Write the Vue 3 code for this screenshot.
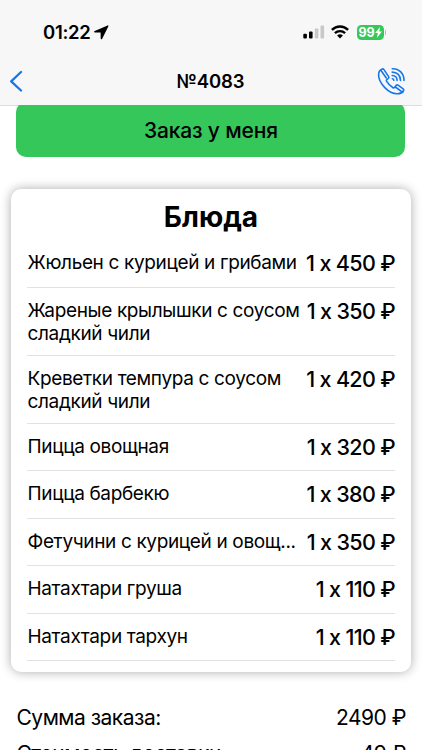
<script setup>
import { ref } from 'vue'

const dishes = ref([
  { id: 1, name: 'Жюльен с курицей и грибами', count: 1, price: 450 },
  { id: 2, name: 'Жареные крылышки с соусом сладкий чили', count: 1, price: 350, long: true },
  { id: 3, name: 'Креветки темпура с соусом сладкий чили', count: 1, price: 420, long: true },
  { id: 4, name: 'Пицца овощная', count: 1, price: 320 },
  { id: 5, name: 'Пицца барбекю', count: 1, price: 380 },
  { id: 6, name: 'Фетучини с курицей и овощ...', count: 1, price: 350 },
  { id: 7, name: 'Натахтари груша', count: 1, price: 110 },
  { id: 8, name: 'Натахтари тархун', count: 1, price: 110 },
])

const totals = ref([
  { label: 'Сумма заказа:', value: 2490 },
  { label: 'Стоимость доставки:', value: 49 },
])
</script>

<template>
  <div class="screen">
    <header class="header">
      <div class="status">
        <div class="clock">
          <span>01:22</span>
          <svg width="15" height="15" viewBox="0 0 15 15">
            <path d="M13.600.400.700 5.900c-.9.400-.7 1.500.2 1.500l5.700.1.1 6c0 .9 1.100 1.100 1.500.2L14.400 1.200c.2-.5-.3-1-.8-.8z" />
          </svg>
        </div>
        <div class="indicators">
          <svg width="22" height="14" viewBox="0 0 22 14">
            <rect x="0.300" y="8.700" width="3.600" height="4.700" rx="1" />
            <rect x="6" y="6.500" width="3.600" height="6.900" rx="1" />
            <rect x="11.800" y="3.600" width="3.600" height="9.800" rx="1" fill="#c8c8c8" />
            <rect x="17.500" y="0.500" width="3.600" height="12.900" rx="1" fill="#c8c8c8" />
          </svg>
          <svg class="wifi" width="18" height="14" viewBox="0 0 18 14">
            <path d="M.9 4.900c4.600-4.600 11.600-4.600 16.200 0M3.900 8.200c2.900-2.800 7.300-2.800 10.200 0" fill="none" stroke="#000" stroke-width="2.400" />
            <path d="M6.100 10.400c1.700-1.500 4.100-1.500 5.800 0L9 13.400z" />
          </svg>
          <div class="battery">
            <span>99</span>
            <svg width="7" height="11" viewBox="0 0 7 11">
              <path d="M5.100 0 .1 6h2.700L1.900 11l5-6.400H4.200z" fill="#fff" />
            </svg>
          </div>
          <i class="cap"></i>
        </div>
      </div>
      <div class="nav">
        <svg width="14" height="22" viewBox="0 0 14 22">
          <path d="M12 2 2.200 11.300 12 20.500" fill="none" stroke="#1677ec" stroke-width="2.300" stroke-linecap="round" stroke-linejoin="round" />
        </svg>
        <h1>№4083</h1>
        <svg class="phone" width="29" height="29" viewBox="0 0 29 29" fill="none" stroke="#1677ec" stroke-width="1.600" stroke-linecap="round" stroke-linejoin="round">
          <path d="M5.300 1.900C3 2.600 1.600 5 1.600 8c0 4 2.300 8.500 6.200 12.600 4.200 4.300 8.900 6.300 12.800 6.100 3 0 5-1.400 6-3.200.4-.7.200-1.300-.4-1.700l-5.200-3.600c-.7-.5-1.400-.4-1.900.2l-1.600 2c-.4.500-1 .6-1.500.3-2.400-1.400-5-4-6.500-6.500-.3-.6-.2-1.100.3-1.500l1.500-1.200c.6-.5.7-1.200.3-1.900L7 2.600c-.4-.7-1-.9-1.700-.7z" />
          <path d="m4 3.500 5.300 7.500M18.300 20l7.500 5.300" />
          <path d="M15.200 1.700c7-.2 11.900 4.700 11.800 11.800M15.200 5.100c5 0 8.300 3.400 8.300 8.400M15.200 8.500c2.900.1 4.800 2 4.900 4.900M15.300 11.700c.9.100 1.500.7 1.600 1.600" />
        </svg>
      </div>
    </header>

    <main class="content">
      <button class="take">Заказ у меня</button>

      <section class="card">
        <h2>Блюда</h2>
        <div v-for="dish in dishes" :key="dish.id" class="dish" :class="{ long: dish.long }">
          <span class="name">{{ dish.name }}</span>
          <span class="price">{{ dish.count }} x {{ dish.price }} ₽</span>
        </div>
      </section>

      <div class="totals">
        <div v-for="row in totals" :key="row.label" class="total">
          <span class="label">{{ row.label }}</span>
          <span class="value">{{ row.value }} ₽</span>
        </div>
      </div>
    </main>
  </div>
</template>

<style>
body {
  margin: 0;
  overflow: hidden;
}
</style>

<style scoped>
.screen {
  width: 422px;
  height: 750px;
  overflow: hidden;
  background: #fff;
  color: #000;
  font-family: Inter, 'Liberation Sans', sans-serif;
  font-feature-settings: 'calt' 0;
}
.header {
  position: relative;
  z-index: 1;
  box-sizing: border-box;
  height: 105px;
  background: #f7f7f7;
}
.status {
  display: flex;
  justify-content: space-between;
  box-sizing: border-box;
  height: 62px;
  padding: 20px 36px 0 43px;
}
.clock {
  display: flex;
  height: 24px;
  align-items: center;
  font-size: 18.5px;
  font-weight: 600;
  letter-spacing: -0.3px;
}
.clock svg {
  margin-left: 4px;
}
.indicators {
  display: flex;
  height: 24px;
  align-items: center;
}
.wifi {
  margin-left: 6px;
}
.battery {
  display: flex;
  align-items: center;
  justify-content: center;
  width: 27px;
  height: 15px;
  margin-left: 8px;
  border-radius: 4.5px;
  background: #35c759;
  color: #fff;
  font-size: 12.5px;
  font-weight: 700;
  letter-spacing: -0.1px;
}
.cap {
  width: 1.5px;
  height: 5px;
  margin-left: 1px;
  border-radius: 0 2px 2px 0;
  background: #bbb;
}
.nav {
  display: flex;
  align-items: center;
  height: 38px;
  padding: 0 16px 0 9px;
}
.nav h1 {
  flex: 1;
  margin: 0 0 0 6px;
  font-size: 18.5px;
  font-weight: 600;
  letter-spacing: -0.1px;
  text-align: center;
  text-indent: 15px;
}
.content {
  border-top: 1px solid #dcdcdc;
}
.take {
  position: relative;
  display: block;
  width: 389px;
  height: 55px;
  margin: -4px 16.4px 0;
  padding: 2px 0 0;
  border: 0;
  border-radius: 10px;
  background: #35c759;
  color: #000;
  font-family: inherit;
  font-size: 21px;
  font-weight: 500;
  letter-spacing: -0.15px;
}
.card {
  box-sizing: border-box;
  width: 400px;
  height: 483px;
  margin: 32px 11px 0;
  padding: 8px 16px 0;
  border-radius: 10px;
  background: #fff;
  box-shadow: 0 0 11px rgba(0, 0, 0, 0.33);
}
.card h2 {
  height: 43px;
  margin: 0;
  font-size: 28px;
  line-height: 41px;
  font-weight: 700;
  text-align: center;
}
.dish {
  display: flex;
  justify-content: space-between;
  box-sizing: border-box;
  height: 47.5px;
  padding-top: 11px;
  border-bottom: 1px solid #e2e2e2;
}
.dish.long {
  height: 68px;
}
.name {
  width: 277px;
  padding-left: 0.5px;
  font-size: 19px;
  line-height: 23px;
  letter-spacing: -0.35px;
}
.price {
  font-size: 21.5px;
  font-weight: 450;
  line-height: 24px;
  letter-spacing: -0.65px;
  white-space: nowrap;
}
.totals {
  padding: 30px 16px 0 16.5px;
}
.total {
  display: flex;
  justify-content: space-between;
  height: 36px;
  font-size: 21px;
  line-height: 31px;
  letter-spacing: -0.5px;
}
</style>
